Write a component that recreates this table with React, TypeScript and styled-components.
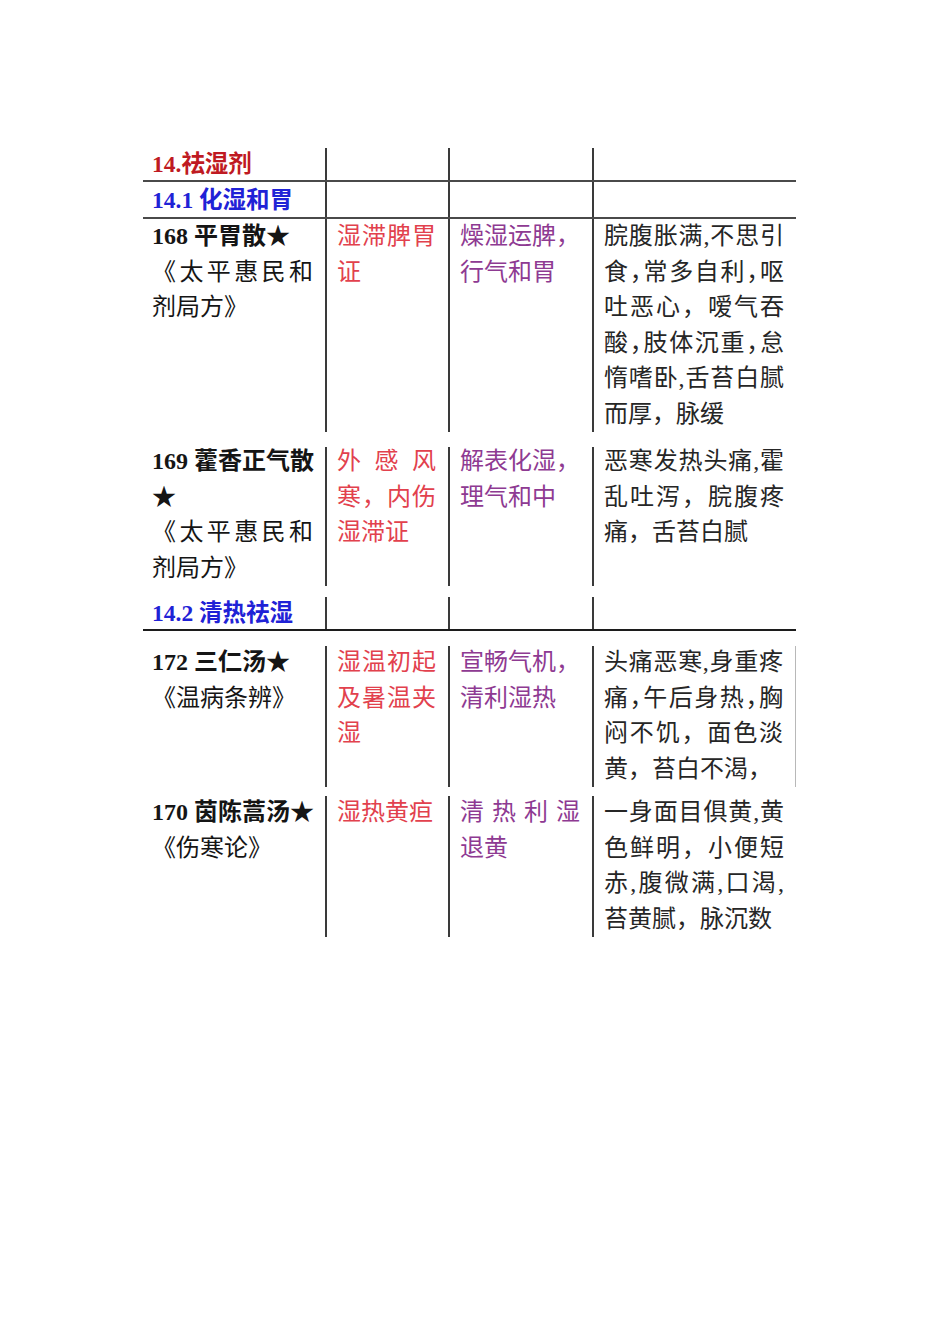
import styled, { createGlobalStyle } from 'styled-components';

type Tone = 'title' | 'section' | 'name' | 'syndrome' | 'method' | 'symptom';

type Line = { text: string; spread?: boolean; bold?: boolean; tight?: boolean };

type Entry = {
  height: number;
  gap: number;
  lead: number;
  edge?: boolean;
  cells: [Line[], Line[], Line[], Line[]];
};

type Section = { kind: 'heading'; text: string; tone: Tone; height: number; gap: number; rule: 'light' | 'heavy' };

const TONES: Record<Tone, string> = {
  title: '#bf1a22',
  section: '#1f22d6',
  name: '#151515',
  syndrome: '#e2414d',
  method: '#8e3a92',
  symptom: '#262626',
};

const CELL_TONES: Tone[] = ['name', 'syndrome', 'method', 'symptom'];

// ** 开头 = 加粗, ~ 开头 = 全角逗号压缩, | 结尾 = 两端对齐
const lines = (...rows: string[]): Line[] =>
  rows.map((row) => {
    const bold = row.startsWith('**');
    const tight = row.startsWith('~');
    const text = row.replace(/^(\*\*|~)/, '').replace(/\|$/, '');
    return { text, bold, tight, spread: row.endsWith('|') };
  });

const ROWS: (Section | ({ kind: 'entry' } & Entry))[] = [
  { kind: 'heading', text: '14.祛湿剂', tone: 'title', height: 34, gap: 0, rule: 'light' },
  { kind: 'heading', text: '14.1 化湿和胃', tone: 'section', height: 37, gap: 0, rule: 'light' },
  {
    kind: 'entry',
    height: 209,
    gap: 0,
    lead: 0,
    cells: [
      lines('**168 平胃散★', '《太平惠民和|', '剂局方》'),
      lines('湿滞脾胃|', '证'),
      lines('燥湿运脾，|', '行气和胃'),
      lines(
        '脘腹胀满,不思引|',
        '~食，常多自利，呕|',
        '吐恶心，嗳气吞|',
        '~酸，肢体沉重，怠|',
        '惰嗜卧,舌苔白腻|',
        '而厚，脉缓',
      ),
    ],
  },
  {
    kind: 'entry',
    height: 139,
    gap: 19,
    lead: -3,
    cells: [
      lines('**169 藿香正气散|', '**★', '《太平惠民和|', '剂局方》'),
      lines('外感风|', '寒，内伤|', '湿滞证'),
      lines('解表化湿，|', '理气和中'),
      lines('恶寒发热头痛,霍|', '乱吐泻，脘腹疼|', '痛，舌苔白腻'),
    ],
  },
  { kind: 'heading', text: '14.2 清热祛湿', tone: 'section', height: 34, gap: 11, rule: 'heavy' },
  {
    kind: 'entry',
    height: 140,
    gap: 15,
    lead: -1,
    edge: true,
    cells: [
      lines('**172 三仁汤★', '《温病条辨》'),
      lines('湿温初起|', '及暑温夹|', '湿'),
      lines('宣畅气机，|', '清利湿热'),
      lines('头痛恶寒,身重疼|', '~痛，午后身热，胸|', '闷不饥，面色淡|', '黄，苔白不渴，'),
    ],
  },
  {
    kind: 'entry',
    height: 138,
    gap: 10,
    lead: -1,
    cells: [
      lines('**170 茵陈蒿汤★', '《伤寒论》'),
      lines('湿热黄疸'),
      lines('清热利湿|', '退黄'),
      lines('一身面目俱黄,黄|', '色鲜明，小便短|', '赤,腹微满,口渴,|', '苔黄腻，脉沉数'),
    ],
  },
];

const renderLine = (line: Line) => {
  if (!line.tight) return line.text;
  const parts = line.text.split('，');
  return parts.map((part, i) => (
    <span key={i}>
      {part}
      {i < parts.length - 1 && <Tight>，</Tight>}
    </span>
  ));
};

export default function App() {
  return (
    <>
      <GlobalStyle />
      <Sheet>
        {ROWS.map((row, i) =>
          row.kind === 'heading' ? (
            <Row key={i} $height={row.height} $gap={row.gap} $rule={row.rule}>
              <Cell $first $center>
                <Heading $tone={row.tone}>{row.text}</Heading>
              </Cell>
              <Cell />
              <Cell />
              <Cell />
            </Row>
          ) : (
            <Row key={i} $height={row.height} $gap={row.gap}>
              {row.cells.map((cell, c) => (
                <Cell key={c} $first={c === 0} $edge={row.edge && c === 3}>
                  <Text $tone={CELL_TONES[c]} $lead={row.lead}>
                    {cell.map((line, l) => (
                      <TextLine key={l} $spread={line.spread} $bold={line.bold}>
                        {renderLine(line)}
                      </TextLine>
                    ))}
                  </Text>
                </Cell>
              ))}
            </Row>
          ),
        )}
      </Sheet>
    </>
  );
}

const GlobalStyle = createGlobalStyle`
  *, *::before, *::after {
    box-sizing: border-box;
  }

  body {
    margin: 0;
    background: #fff;
    font-family: "Liberation Serif", "Noto Sans CJK SC", serif;
  }
`;

const Sheet = styled.div`
  width: 950px;
  min-height: 1344px;
  padding: 148px 0 0 143px;
`;

const Row = styled.div<{ $height: number; $gap: number; $rule?: 'light' | 'heavy' }>`
  display: grid;
  grid-template-columns: 182px 123px 144px 204px;
  width: 653px;
  height: ${(p) => p.$height}px;
  margin-top: ${(p) => p.$gap}px;
  border-bottom: ${(p) =>
    p.$rule === 'heavy' ? '2px solid #1c1c1c' : p.$rule === 'light' ? '2px solid #4a4a4a' : 'none'};
`;

const Cell = styled.div<{ $first?: boolean; $edge?: boolean; $center?: boolean }>`
  display: ${(p) => (p.$center ? 'flex' : 'block')};
  align-items: center;
  min-width: 0;
  padding: 0 12px 0 ${(p) => (p.$first ? 9 : 10)}px;
  border-left: ${(p) => (p.$first ? 'none' : '2px solid #3a3a3a')};
  border-right: ${(p) => (p.$edge ? '1px solid #b8b8b8' : 'none')};
`;

const Heading = styled.div<{ $tone: Tone }>`
  color: ${(p) => TONES[p.$tone]};
  font-size: 23.5px;
  font-weight: 700;
  line-height: 30px;
  white-space: nowrap;
`;

const Text = styled.div<{ $tone: Tone; $lead: number }>`
  margin-top: ${(p) => p.$lead}px;
  color: ${(p) => TONES[p.$tone]};
  font-size: 24px;
  line-height: 35.5px;
`;

const TextLine = styled.div<{ $spread?: boolean; $bold?: boolean }>`
  white-space: nowrap;
  font-weight: ${(p) => (p.$bold ? 700 : 400)};
  text-align: ${(p) => (p.$spread ? 'justify' : 'left')};
  text-align-last: ${(p) => (p.$spread ? 'justify' : 'auto')};
`;

const Tight = styled.span`
  font-feature-settings: 'halt';
`;
